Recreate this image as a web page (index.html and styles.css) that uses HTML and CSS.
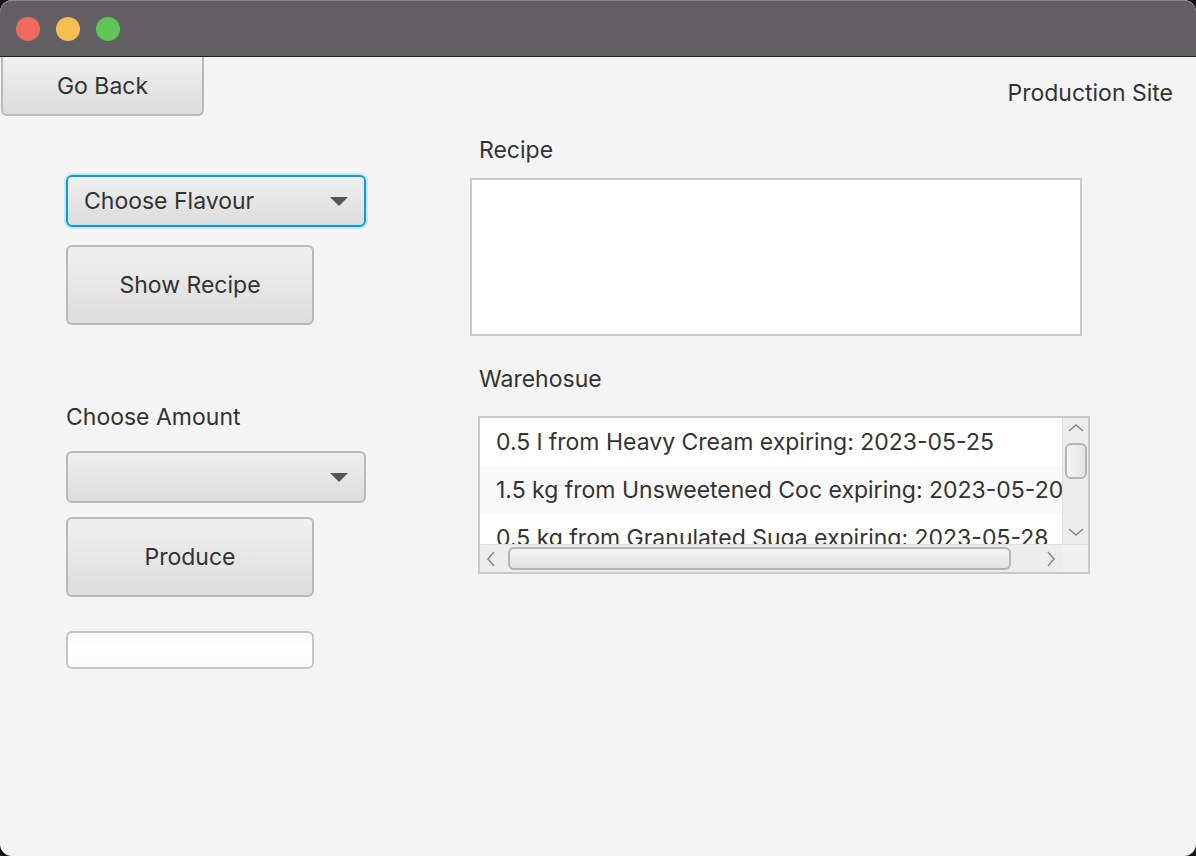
FILE: index.html
```html
<!DOCTYPE html>
<html>
<head>
<meta charset="utf-8">
<link rel="stylesheet" href="styles.css">
</head>
<body>
<div class="window">
  <div class="titlebar">
    <span class="light red"></span>
    <span class="light yellow"></span>
    <span class="light green"></span>
  </div>
  <div class="content">
    <div class="toprow">
      <button class="btn goback">Go Back</button>
      <div class="site">Production Site</div>
    </div>
    <div class="main">
      <div class="leftcol">
        <div class="combo focused"><span class="combo-text">Choose Flavour</span><span class="arrow"></span></div>
        <button class="btn big show">Show Recipe</button>
        <div class="label amount">Choose Amount</div>
        <div class="combo"><span class="combo-text"></span><span class="arrow"></span></div>
        <button class="btn big produce">Produce</button>
        <div class="field"></div>
      </div>
      <div class="rightcol">
        <div class="label">Recipe</div>
        <div class="textarea"></div>
        <div class="label warehouse">Warehosue</div>
        <div class="list">
          <div class="list-body">
            <div class="rows">
              <div class="row">0.5 l from Heavy Cream expiring: 2023-05-25</div>
              <div class="row odd">1.5 kg from Unsweetened Coc expiring: 2023-05-20</div>
              <div class="row">0.5 kg from Granulated Suga expiring: 2023-05-28</div>
            </div>
            <div class="vscroll">
              <svg class="chev" width="18" height="12" viewBox="0 0 18 12"><path d="M2 9 L9 3 L16 9" fill="none" stroke="#8a8a8a" stroke-width="1.6"/></svg>
              <div class="vthumb"></div>
              <div class="vspace"></div>
              <svg class="chev" width="18" height="12" viewBox="0 0 18 12"><path d="M2 3 L9 9 L16 3" fill="none" stroke="#8a8a8a" stroke-width="1.6"/></svg>
            </div>
          </div>
          <div class="hscroll">
            <svg class="hchev" width="12" height="18" viewBox="0 0 12 18"><path d="M9 2 L3 9 L9 16" fill="none" stroke="#8a8a8a" stroke-width="1.6"/></svg>
            <div class="hthumb"></div>
            <svg class="hchev" width="12" height="18" viewBox="0 0 12 18"><path d="M3 2 L9 9 L3 16" fill="none" stroke="#8a8a8a" stroke-width="1.6"/></svg>
            <div class="corner"></div>
          </div>
        </div>
      </div>
    </div>
  </div>
</div>
</body>
</html>
```

FILE: styles.css
```css
* { box-sizing: border-box; }
html, body { margin: 0; padding: 0; }
body {
  background: #111;
  width: 1196px;
  height: 856px;
  overflow: hidden;
  font-family: Inter, "Noto Sans", sans-serif;
  color: #333333;
}
.window {
  width: 1196px;
  height: 856px;
  background: #f4f4f4;
  border-radius: 12px;
  overflow: hidden;
  display: flex;
  flex-direction: column;
}
.titlebar {
  height: 57px;
  flex: none;
  background: #625f62;
  border-top: 1px solid #8a888a;
  border-bottom: 1px solid #1f1f1f;
  border-radius: 12px 12px 0 0;
  display: flex;
  align-items: center;
  padding-left: 16px;
  gap: 16px;
}
.light {
  width: 24px;
  height: 24px;
  border-radius: 50%;
  display: block;
}
.red { background: #ee6a5e; }
.yellow { background: #f5be4f; }
.green { background: #61c554; }

.content { flex: 1; display: flex; flex-direction: column; }
.toprow {
  display: flex;
  justify-content: space-between;
  align-items: flex-start;
}
.btn {
  font-family: Inter, "Noto Sans", sans-serif;
  font-size: 23px;
  color: #333;
  background: linear-gradient(#f0f0f0, #dcdcdc);
  border: 2px solid #b8b8b8;
  border-radius: 6px;
  padding: 0;
}
.goback {
  margin-left: 1px;
  width: 203px;
  height: 59px;
  border-top: none;
  border-radius: 0 0 6px 6px;
}
.site {
  font-size: 23px;
  margin-top: 22px;
  margin-right: 23px;
}
.main {
  display: flex;
  align-items: flex-start;
  padding-left: 66px;
}
.leftcol {
  width: 300px;
  margin-top: 59px;
  display: flex;
  flex-direction: column;
  align-items: flex-start;
}
.combo {
  width: 300px;
  height: 52px;
  border: 2px solid #b8b8b8;
  border-radius: 6px;
  background: linear-gradient(#efefef, #dcdcdc);
  display: flex;
  align-items: center;
  justify-content: space-between;
  padding: 0 16px 0 16px;
  font-size: 23px;
}
.combo.focused {
  border-color: #0e9ad7;
  box-shadow: 0 0 0 2px #c9e6f4;
}
.arrow {
  width: 0; height: 0;
  border-left: 9px solid transparent;
  border-right: 9px solid transparent;
  border-top: 9px solid #555;
}
.big { width: 248px; height: 80px; }
.show { margin-top: 18px; }
.label {
  font-size: 23px;
  line-height: 28px;
}
.amount { margin-top: 78px; margin-left: 0; }
.amount + .combo { margin-top: 20px; }
.produce { margin-top: 14px; }
.field {
  margin-top: 34px;
  width: 248px;
  height: 38px;
  border: 2px solid #c4c4c4;
  border-radius: 6px;
  background: linear-gradient(#f8f8f8, #ffffff 40%, #fafafa);
}

.rightcol {
  margin-left: 104px;
  margin-top: 20px;
  display: flex;
  flex-direction: column;
  align-items: flex-start;
}
.rightcol .label { margin-left: 9px; }
.textarea {
  margin-top: 14px;
  width: 612px;
  height: 158px;
  background: #fff;
  border: 2px solid #c8c8c8;
}
.warehouse { margin-top: 29px; }
.list {
  margin-top: 23px;
  margin-left: 8px;
  width: 612px;
  height: 158px;
  border: 2px solid #c8c8c8;
  background: #fff;
  display: flex;
  flex-direction: column;
  overflow: hidden;
}
.list-body {
  height: 126px;
  display: flex;
  overflow: hidden;
}
.rows {
  flex: 1;
  overflow: hidden;
}
.row {
  height: 48px;
  line-height: 48px;
  padding-left: 16px;
  font-size: 23px;
  white-space: nowrap;
  background: #fff;
}
.row.odd { background: #f9f9f9; }
.vscroll {
  width: 26px;
  flex: none;
  background: #ececec;
  border-left: 1px solid #e0e0e0;
  display: flex;
  flex-direction: column;
  align-items: center;
  padding-top: 4px;
}
.chev { display: block; flex: none; }
.vthumb {
  margin-top: 9px;
  width: 22px;
  height: 36px;
  border: 2px solid #b4b4b4;
  border-radius: 6px;
  background: linear-gradient(90deg, #f4f4f4, #e4e4e4);
}
.vspace { flex: 1; }
.vscroll .chev:last-child { margin-bottom: 6px; }
.hscroll {
  height: 28px;
  flex: none;
  background: #ececec;
  border-top: 1px solid #e0e0e0;
  display: flex;
  align-items: center;
  padding-left: 5px;
}
.hthumb {
  margin-left: 11px;
  width: 503px;
  height: 23px;
  border: 2px solid #b4b4b4;
  border-radius: 6px;
  background: linear-gradient(#f4f4f4, #e2e2e2);
}
.hscroll .hchev:nth-of-type(2) { margin-left: 34px; }
.corner {
  margin-left: auto;
  width: 26px;
  height: 28px;
  background: #efefef;
}
```
